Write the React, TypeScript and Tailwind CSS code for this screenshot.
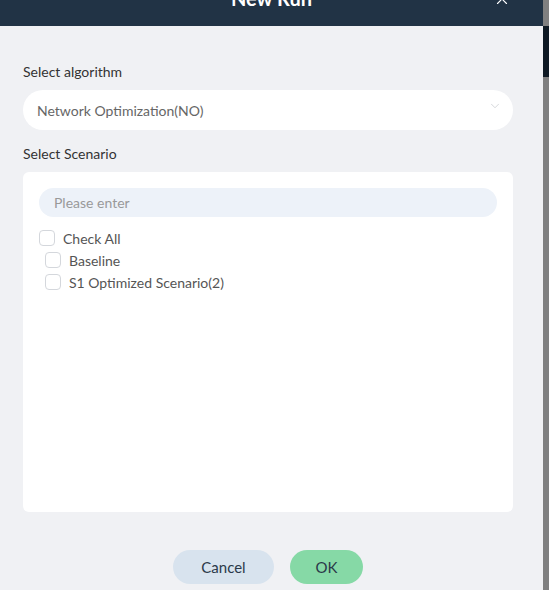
import { X, ChevronDown } from 'lucide-react'

const scenarios = ['Baseline', 'S1 Optimized Scenario(2)']

function Box() {
  return (
    <span className="block w-[16px] h-[16px] rounded-[4px] border border-[#d4d7dc] bg-white shrink-0" />
  )
}

export default function App() {
  return (
    <div
      className="flex w-[549px] h-[590px] overflow-hidden bg-[#808080]"
      style={{ fontFamily: 'Lato, "Noto Sans", sans-serif' }}
    >
      <div className="w-[543px] shrink-0 flex flex-col bg-[#f0f1f4] -mt-[30px]">
        <div className="h-[56px] shrink-0 bg-[#213345] flex items-center justify-center relative">
          <span className="text-white text-[20px] font-bold">New Run</span>
          <X className="absolute right-[32px] top-[20px] text-white" size={18} strokeWidth={1.5} />
        </div>

        <div className="px-[23px] pt-[36px] flex flex-col">
          <label className="text-[14px] leading-[20px] text-[#333]">Select algorithm</label>
          <div className="mt-[8px] h-[40px] w-[490px] rounded-full bg-white flex items-center justify-between pl-[14px] pr-[11px]">
            <span className="text-[14px] text-[#666]">Network Optimization(NO)</span>
            <ChevronDown className="text-[#c4c7cc] -mt-[8px]" size={14} strokeWidth={1.2} />
          </div>

          <label className="mt-[14px] text-[14px] leading-[20px] text-[#333]">Select Scenario</label>
          <div className="mt-[8px] h-[340px] w-[490px] rounded-[6px] bg-white p-[16px] flex flex-col">
            <div className="h-[29px] rounded-full bg-[#edf2f9] flex items-center pl-[15px] text-[14px] text-[#999]">
              Please enter
            </div>
            <div className="mt-[13px] flex items-center gap-[8px] h-[16px] text-[14px] text-[#555]">
              <Box />
              <span>Check All</span>
            </div>
            <div className="flex flex-col pl-[6px] mt-[6px] gap-[6px]">
              {scenarios.map((s) => (
                <div key={s} className="flex items-center gap-[8px] h-[16px] text-[14px] text-[#555]">
                  <Box />
                  <span>{s}</span>
                </div>
              ))}
            </div>
          </div>

          <div className="mt-[38px] flex justify-center gap-[16px] pr-[7px]">
            <button className="h-[34px] w-[101px] rounded-full bg-[#d8e3ee] text-[15px] text-[#2b3a4a]">
              Cancel
            </button>
            <button className="h-[34px] w-[73px] rounded-full bg-[#86d9a6] text-[15px] text-[#2b3a4a]">
              OK
            </button>
          </div>
        </div>
      </div>
      <div className="flex-1 flex flex-col">
        <div className="h-[26px] bg-[#808080]" />
        <div className="h-[51px] bg-[#0f1a24]" />
        <div className="flex-1 bg-[#808080]" />
      </div>
    </div>
  )
}
